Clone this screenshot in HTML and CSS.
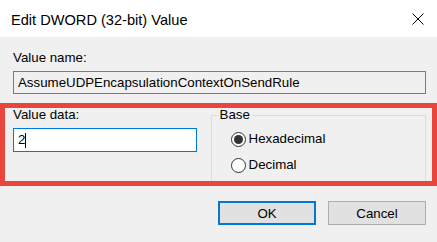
FILE: index.html
```html
<!DOCTYPE html>
<html>
<head>
<meta charset="utf-8">
<link rel="stylesheet" href="styles.css">
</head>
<body>
<div class="dialog">
  <div class="titlebar">
    <span class="title">Edit DWORD (32-bit) Value</span>
    <svg class="close" width="12" height="12" viewBox="0 0 12 12"><path d="M0.5 0.5 L11.5 11.5 M11.5 0.5 L0.5 11.5" stroke="#000" stroke-width="1" fill="none"/></svg>
  </div>
  <div class="content">
    <div class="label">Value name:</div>
    <div class="namebox">AssumeUDPEncapsulationContextOnSendRule</div>
    <div class="row">
      <div class="datacol">
        <div class="label">Value data:</div>
        <div class="databox"><span>2</span><span class="caret"></span></div>
      </div>
      <fieldset class="base">
        <legend>Base</legend>
        <div class="option"><span class="radio checked"></span><span>Hexadecimal</span></div>
        <div class="option"><span class="radio"></span><span>Decimal</span></div>
      </fieldset>
    </div>
    <div class="buttons">
      <div class="btn default">OK</div>
      <div class="btn">Cancel</div>
    </div>
  </div>
  <div class="highlight"></div>
</div>
</body>
</html>
```

FILE: styles.css
```css
html, body {
  margin: 0;
  padding: 0;
}
body {
  width: 437px;
  height: 242px;
  overflow: hidden;
  background: #f0f0f0;
  font-family: "Liberation Sans", Arial, sans-serif;
  font-size: 13.3px;
  color: #000;
}
.dialog {
  position: relative;
  width: 437px;
  height: 242px;
}
.titlebar {
  height: 37px;
  box-sizing: border-box;
  background: #fff;
  display: flex;
  align-items: flex-start;
  justify-content: space-between;
  padding: 3px 13px 0 11px;
}
.title {
  font-size: 14.6px;
  line-height: 34px;
}
.close {
  margin-top: 10px;
  display: block;
}
.content {
  padding: 13px 11px 0 13px;
}
.label {
  line-height: 16px;
  height: 16px;
}
.namebox {
  margin-top: 5px;
  height: 23px;
  box-sizing: border-box;
  border: 1px solid #7a7a7a;
  background: #f0f0f0;
  line-height: 21px;
  padding-left: 4px;
  white-space: nowrap;
}
.row {
  display: flex;
  margin-top: 13px;
  gap: 14px;
}
.datacol {
  width: 184px;
}
.databox {
  margin-top: 5px;
  height: 24px;
  box-sizing: border-box;
  border: 1px solid #0078d7;
  background: #fff;
  line-height: 22px;
  padding-left: 4px;
  display: flex;
  align-items: center;
}
.caret {
  display: inline-block;
  width: 0;
  height: 15px;
  border-left: 1px solid #000;
}
.base {
  margin: 0;
  width: 216px;
  height: 77px;
  box-sizing: border-box;
  border: 1px solid #dcdcdc;
  padding: 8px 0 0 6px;
  display: flex;
  flex-direction: column;
  gap: 10px;
}
.base legend {
  padding: 0 2px;
  margin-left: 0;
  line-height: 16px;
}
.option {
  display: flex;
  align-items: center;
  gap: 3px;
  line-height: 16px;
  height: 16px;
  margin-left: 13px;
}
.radio {
  width: 15px;
  height: 15px;
  box-sizing: border-box;
  border: 1px solid #333;
  border-radius: 50%;
  background: #fff;
  display: flex;
  align-items: center;
  justify-content: center;
}
.radio.checked::after {
  content: "";
  width: 9px;
  height: 9px;
  border-radius: 50%;
  background: #333;
}
.buttons {
  display: flex;
  justify-content: flex-end;
  gap: 12px;
  margin-top: 17px;
}
.btn {
  width: 98px;
  height: 24px;
  box-sizing: border-box;
  border: 1px solid #adadad;
  background: #e1e1e1;
  display: flex;
  align-items: center;
  justify-content: center;
}
.btn.default {
  border: 2px solid #0078d7;
}
.highlight {
  position: absolute;
  left: 0;
  top: 103px;
  width: 437px;
  height: 83px;
  box-sizing: border-box;
  border: 5px solid #e8453c;
  pointer-events: none;
}
```
